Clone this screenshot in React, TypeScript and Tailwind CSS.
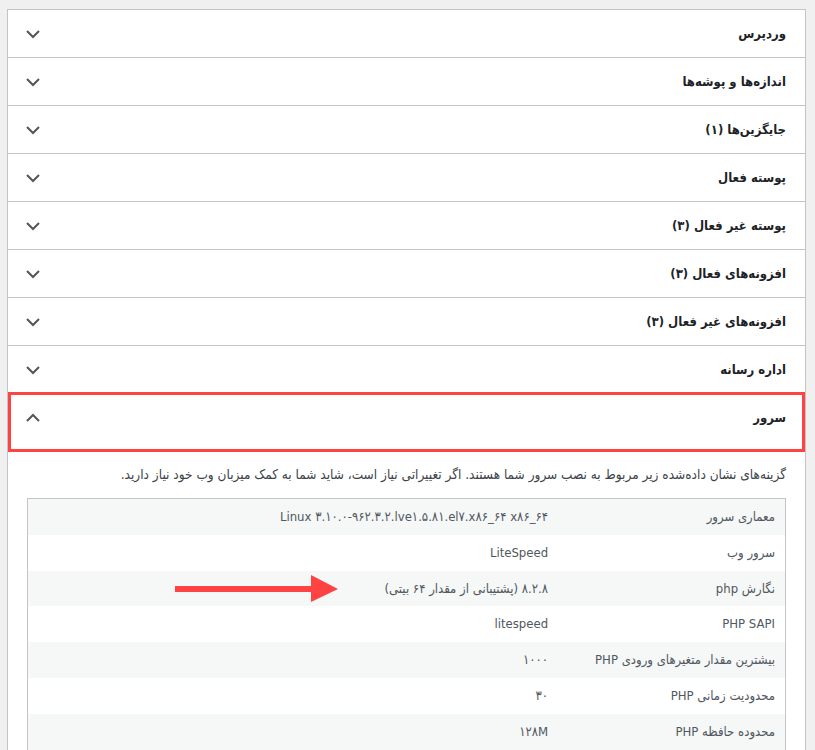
import React from "react";

const sections = [
  "وردپرس",
  "اندازه‌ها و پوشه‌ها",
  "جایگزین‌ها (۱)",
  "پوسته فعال",
  "پوسته غیر فعال (۳)",
  "افزونه‌های فعال (۳)",
  "افزونه‌های غیر فعال (۳)",
  "اداره رسانه",
];

const rows = [
  ["معماری سرور", "Linux ۳.۱۰.۰-۹۶۲.۳.۲.lve۱.۵.۸۱.el۷.x۸۶_۶۴ x۸۶_۶۴"],
  ["سرور وب", "LiteSpeed"],
  ["نگارش php", "۸.۲.۸ (پشتیبانی از مقدار ۶۴ بیتی)"],
  ["PHP SAPI", "litespeed"],
  ["بیشترین مقدار متغیرهای ورودی PHP", "۱۰۰۰"],
  ["محدودیت زمانی PHP", "۳۰"],
  ["محدوده حافظه PHP", "۱۲۸M"],
];

function Chevron({ up = false }: { up?: boolean }) {
  return (
    <svg width="16" height="16" viewBox="0 0 16 16" className="shrink-0">
      <polyline
        points={up ? "2,11 8,5 14,11" : "2,5 8,11 14,5"}
        fill="none"
        stroke="#50575e"
        strokeWidth="2"
      />
    </svg>
  );
}

export default function App() {
  return (
    <div
      dir="rtl"
      className="min-h-screen bg-[#f0f0f1] pt-[9px] pr-[9px] pl-[7px] text-[13px] text-[#1d2327]"
      style={{ fontFamily: '"DejaVu Sans Condensed", "DejaVu Sans", sans-serif' }}
    >
      <div className="border border-[#c3c4c7] bg-white">
        {sections.map((s) => (
          <div
            key={s}
            className="flex h-[48px] items-center justify-between border-b border-[#c3c4c7] pr-[19px] pl-[17px]"
          >
            <span className="font-semibold">{s}</span>
            <Chevron />
          </div>
        ))}

        {/* expanded section */}
        <div className="relative flex h-[48px] items-center justify-between pr-[19px] pl-[17px]">
          <span className="font-semibold">سرور</span>
          <Chevron up />
          <div className="absolute -top-[2px] -bottom-[10px] left-0 right-0 border-[3px] border-[#ff4343]" />
        </div>

        <div className="px-[19px] pb-5 pt-[22px]">
          <p className="mb-[14px] text-[13.5px] leading-[20px] text-[#3c434a]">
            گزینه‌های نشان داده‌شده زیر مربوط به نصب سرور شما هستند. اگر تغییراتی نیاز است، شاید شما به کمک میزبان وب خود نیاز دارید.
          </p>
          <div className="relative">
            <table className="w-full border border-[#c3c4c7] text-[13px] text-[#50575e]">
              <tbody>
                {rows.map(([k, v], i) => (
                  <tr key={k} className={i % 2 === 0 ? "bg-[#f6f7f7]" : "bg-white"}>
                    <td className="w-[30%] px-[10px] py-[8px] text-right leading-[19.8px]">{k}</td>
                    <td className="px-[10px] py-[8px] text-right leading-[19.8px]">{v}</td>
                  </tr>
                ))}
              </tbody>
            </table>
            <svg
              width="164"
              height="28"
              viewBox="0 0 164 28"
              className="absolute left-[148px] top-[77px]"
            >
              <rect x="0" y="11" width="140" height="6" fill="#ff4343" />
              <polygon points="136,0 163,14 136,27" fill="#ff4343" />
            </svg>
          </div>
        </div>
      </div>
    </div>
  );
}
